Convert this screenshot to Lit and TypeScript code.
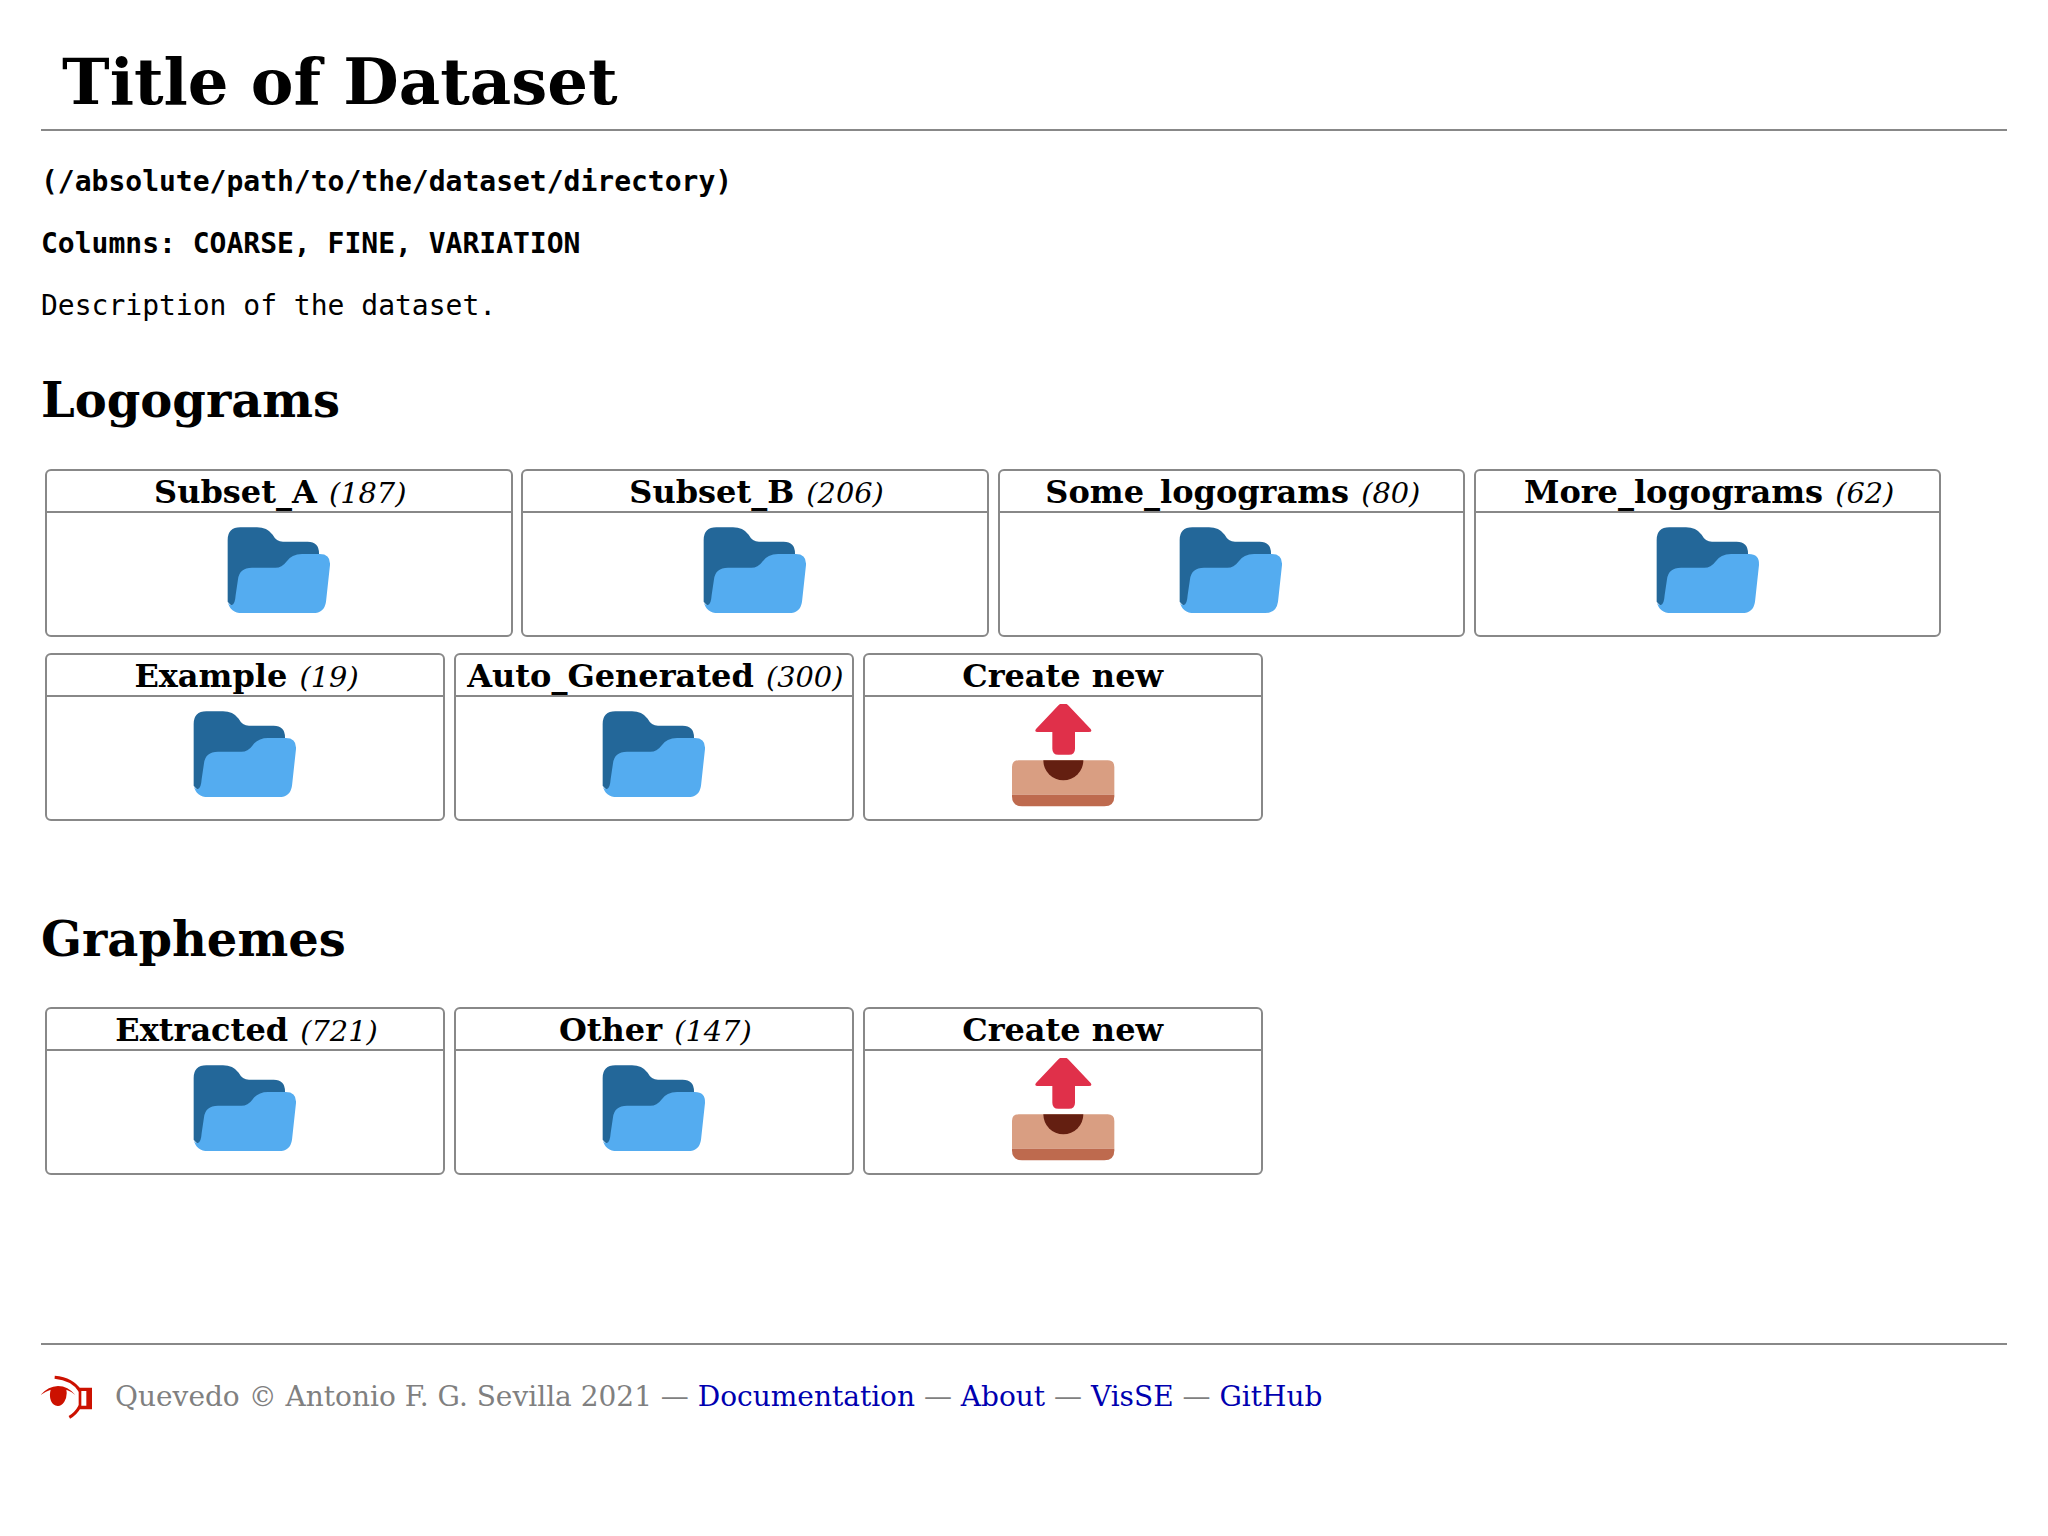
import { LitElement, html, css } from "lit";
import { customElement } from "lit/decorators.js";

const folder = html`<svg class="ico" width="120" height="100" viewBox="-4 0 360 300">
  <path fill="#236799" d="M22 60Q22 22 60 22H110Q140 22 157 44Q168 65 188 65H262Q296 65 296 100V200H60V240Q50 279 22 245Z"/>
  <path fill="#54ACF0" d="M35 255Q44 253 46 225L53 178Q57 143 95 143H165Q185 143 198 125Q214 102 245 102H298Q331 102 329 135L317 245Q312 279 278 279H65Q30 279 22 245Q25 255 35 255Z"/>
</svg>`;

const tray = html`<svg class="ico" width="120" height="110" viewBox="127 71 360 330">
  <path fill="#E0304A" d="M292 76Q308 60 324 76L390 146Q396 155 385 155H343V205Q343 223 325 223H293Q275 223 275 205V155H231Q220 155 226 146Z"/>
  <path fill="#D99E82" d="M174 240H441Q461 240 461 260V343H154V260Q154 240 174 240Z"/>
  <path fill="#BE6A4E" d="M154 343H461V348Q461 378 431 378H184Q154 378 154 348Z"/>
  <path fill="#641F11" d="M248 240H368A60 60 0 0 1 248 240Z"/>
</svg>`;

const logo = html`<svg class="logo" width="54" height="50" viewBox="9 0 162 150">
  <path fill="#cc1100" d="M8 72Q30 46 60 45Q90 45 112 72Q98 60 85 56Q89 76 79 92Q69 106 59 105Q45 104 39 90Q33 74 38 56Q24 60 8 72Z"/>
  <path fill="none" stroke="#cc1100" stroke-width="9" d="M50 19Q104 24 126 60"/>
  <path fill="none" stroke="#cc1100" stroke-width="9" d="M126 105Q114 128 94 139"/>
  <path fill="#cc1100" fill-rule="evenodd" d="M122 50H162V115H122ZM130 60V104H145V60Z"/>
</svg>`;

interface Item { name: string; count?: number; }
const logoRow1: Item[] = [
  { name: "Subset_A", count: 187 },
  { name: "Subset_B", count: 206 },
  { name: "Some_logograms", count: 80 },
  { name: "More_logograms", count: 62 },
];
const logoRow2: Item[] = [
  { name: "Example", count: 19 },
  { name: "Auto_Generated", count: 300 },
  { name: "Create new" },
];
const graphemes: Item[] = [
  { name: "Extracted", count: 721 },
  { name: "Other", count: 147 },
  { name: "Create new" },
];

@customElement("app-root")
export class AppRoot extends LitElement {
  static styles = css`
    :host { display: block; font-family: "DejaVu Serif", serif; color: #000; background: #fff; }
    .page { padding: 0 41px; }
    h1 { margin: 0; padding: 44px 0 9px 21px; font-size: 64px; line-height: 76px; font-weight: bold; border-bottom: 2px solid #888; }
    p { margin: 0; font-family: "DejaVu Sans Mono", monospace; font-size: 28px; line-height: 33px; }
    p.first { margin-top: 34px; }
    p + p { margin-top: 29px; }
    b { font-weight: bold; }
    h2 { margin: 0; font-size: 48px; line-height: 56px; font-weight: bold; }
    .sec1 { margin-top: 50px; }
    .sec2 { margin-top: 90px; }
    .rows { margin-top: 41px; display: flex; flex-direction: column; gap: 16px; padding-left: 4px; }
    .sec2 + .rows { margin-top: 40px; }
    .row { display: flex; gap: 8.8px; }
    .card { box-sizing: border-box; width: 400px; height: 168px; border: 2px solid #888; border-radius: 6px; display: flex; flex-direction: column; }
    .wide { width: 467.5px; }
    .head { height: 42px; box-sizing: border-box; border-bottom: 2px solid #888; text-align: center; font-size: 32px; line-height: 42px; font-weight: bold; white-space: nowrap; }
    .counted { padding-left: 3px; }
    .head i { font-weight: normal; font-size: 28.8px; margin-left: 1px; }
    .body { flex: 1; display: flex; justify-content: center; align-items: flex-start; padding-top: 7px; }
    .ico { display: block; }
    footer { margin-top: 168px; border-top: 2px solid #888; padding-top: 26px; display: flex; align-items: center; gap: 20px; font-size: 28px; color: #808080; }
    a { color: #0000b0; text-decoration: none; }
  `;

  private card(it: Item, wide: boolean) {
    const counted = it.count !== undefined;
    return html`<div class="card ${wide ? "wide" : ""}">
      <div class="head ${counted ? "counted" : ""}">${it.name}${counted ? html` <i>(${it.count})</i>` : ""}</div>
      <div class="body">${counted ? folder : tray}</div>
    </div>`;
  }

  render() {
    return html`<div class="page">
      <h1>Title of Dataset</h1>
      <p class="first"><b>(/absolute/path/to/the/dataset/directory)</b></p>
      <p><b>Columns: COARSE, FINE, VARIATION</b></p>
      <p>Description of the dataset.</p>
      <h2 class="sec1">Logograms</h2>
      <div class="rows">
        <div class="row">${logoRow1.map((i) => this.card(i, true))}</div>
        <div class="row">${logoRow2.map((i) => this.card(i, false))}</div>
      </div>
      <h2 class="sec2">Graphemes</h2>
      <div class="rows">
        <div class="row">${graphemes.map((i) => this.card(i, false))}</div>
      </div>
      <footer>
        ${logo}
        <span>Quevedo © Antonio F. G. Sevilla 2021 — <a>Documentation</a> — <a>About</a> — <a>VisSE</a> — <a>GitHub</a></span>
      </footer>
    </div>`;
  }
}
